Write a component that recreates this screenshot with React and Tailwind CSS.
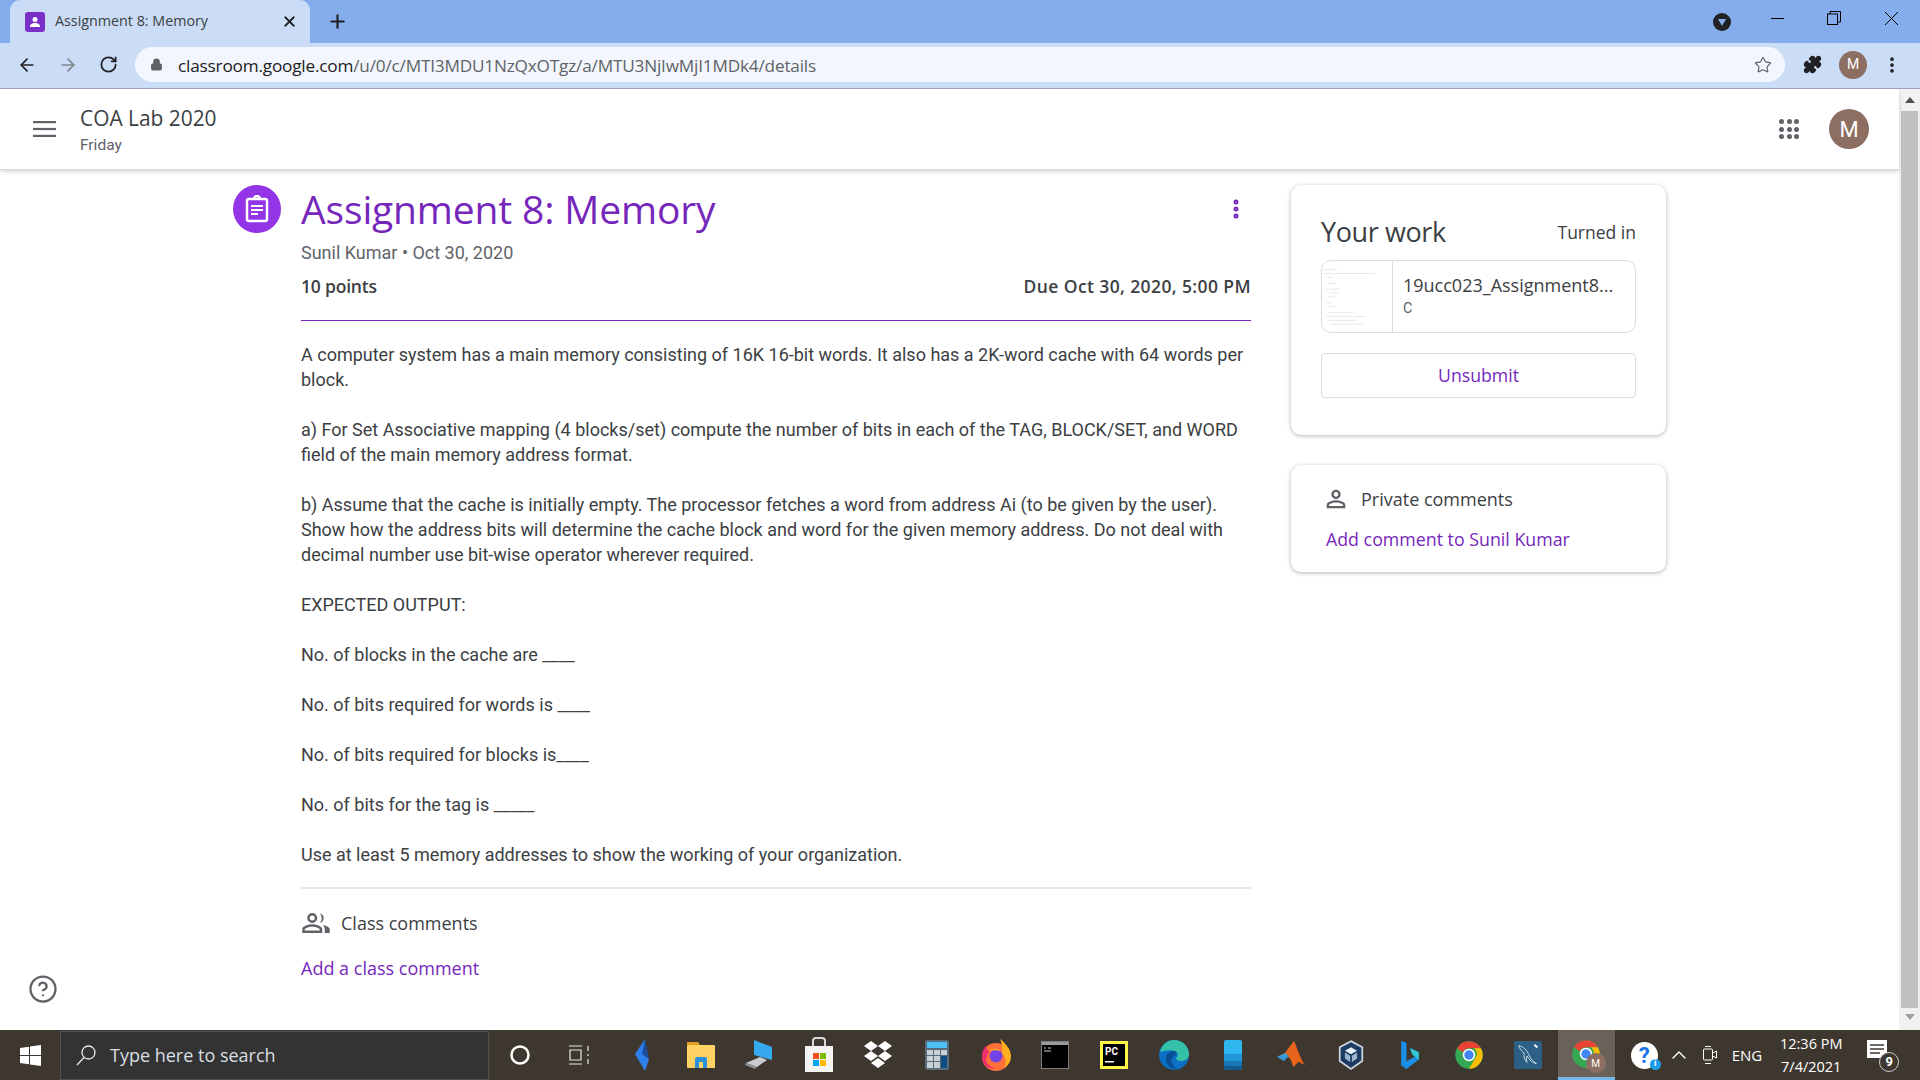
import { ArrowLeft, ArrowRight, RotateCw, Lock, Star, Plus, X, EllipsisVertical, CircleHelp, ChevronUp, Puzzle } from "lucide-react";

const sans = "font-['Roboto',sans-serif]";
const display = "font-['Open_Sans',sans-serif]";

const Avatar = ({ className }) => (
  <div className={`flex items-center justify-center rounded-full bg-[#8d6e63] text-white ${className}`}>M</div>
);

const PersonIcon = ({ className }) => (
  <svg viewBox="0 0 24 24" className={className} fill="#5f6368">
    <path d="M12 12a4 4 0 1 0 0-8 4 4 0 0 0 0 8zm0-6a2 2 0 1 1 0 4 2 2 0 0 1 0-4zm0 7c-2.7 0-8 1.3-8 4v3h16v-3c0-2.7-5.3-4-8-4zm6 5H6v-1c0-.6 3.100-2 6-2s6 1.400 6 2v1z" />
  </svg>
);

const PeopleIcon = ({ className }) => (
  <svg viewBox="0 0 24 24" className={className} fill="#5f6368">
    <path d="M9 12a4 4 0 1 0 0-8 4 4 0 0 0 0 8zm0-6a2 2 0 1 1 0 4 2 2 0 0 1 0-4zm0 7c-2.700 0-8 1.300-8 4v3h16v-3c0-2.700-5.300-4-8-4zm6 5H3v-1c0-.6 3.100-2 6-2s6 1.400 6 2v1z" />
    <path d="M15 4.100a4 4 0 0 1 0 7.800c1-1 1.500-2.400 1.500-3.900S16 5.100 15 4.100zM17.500 13.500c2.500.5 5.500 1.700 5.500 3.500v3h-4v-3c0-1.500-.6-2.600-1.500-3.500z" />
  </svg>
);

const Thumb = () => (
  <svg viewBox="0 0 72 72" className="h-full w-full">
    {[[2, 8, 14], [2, 12, 44], [30, 12, 24], [6, 16, 6], [6, 22, 8], [4, 28, 14], [8, 32, 10], [6, 36, 8], [4, 42, 6], [6, 46, 7], [6, 52, 26], [4, 56, 40], [6, 60, 30], [8, 64, 34]].map(([x, y, w], i) => (
      <rect key={i} x={x} y={y} width={w} height="0.8" fill="#e2e2e2" />
    ))}
  </svg>
);

const Chrome = ({ size = 34 }) => (
  <svg width={size} height={size} viewBox="0 0 48 48">
    <circle cx="24" cy="24" r="22" fill="#34a853" />
    <path d="M24 2a22 22 0 0 1 19 11H24a11 11 0 0 0-10 6.500L5 13A22 22 0 0 1 24 2z" fill="#ea4335" />
    <path d="M43 13a22 22 0 0 1-19 33l10-17a11 11 0 0 0-2-16z" fill="#fbbc04" />
    <circle cx="24" cy="24" r="10" fill="#fff" />
    <circle cx="24" cy="24" r="7.500" fill="#4285f4" />
  </svg>
);

const icons = [
  <svg key="cortana" width="22" height="22" viewBox="0 0 22 22"><circle cx="11" cy="11" r="8.500" fill="none" stroke="#fff" strokeWidth="2.500" /></svg>,
  <svg key="task" width="24" height="24" viewBox="0 0 24 24" fill="none" stroke="#e8e8e8" strokeWidth="1.200"><path d="M2 3h13M2 21h13M3 7h11v10H3zM21 3v5M21 11v2M21 16v5" /></svg>,
  <svg key="bolt" width="22" height="34" viewBox="0 0 22 34"><path d="M14 1 4 16l10 17 4-12-6-5z" fill="#2f80ed" /><path d="M14 1l-3 15 7 5z" fill="#1b4f9c" /></svg>,
  <svg key="explorer" width="30" height="28" viewBox="0 0 30 28"><path d="M1 1h11l2 3h-13z" fill="#e0a020" /><rect x="1" y="4" width="28" height="23" rx="1" fill="#ffd263" /><path d="M9 27V18a2 2 0 0 1 2-2h8a2 2 0 0 1 2 2v9h-4v-6h-4v6z" fill="#2b90d9" /></svg>,
  <svg key="pc" width="30" height="32" viewBox="0 0 30 32"><path d="M9 1l18 7v13L9 16z" fill="#36a9f0" /><path d="M15 18l7 3-10 7-11-4z" fill="#c9ccd0" /><path d="M1 24l11 4-2 2-10-4z" fill="#8d9297" /></svg>,
  <svg key="store" width="30" height="36" viewBox="0 0 30 36"><path d="M9 9V4a3 3 0 0 1 3-3h6a3 3 0 0 1 3 3v5" fill="none" stroke="#d8d8d8" strokeWidth="2" /><path d="M1 9h28v26H1z" fill="#f4f4f4" /><rect x="9" y="16" width="6" height="6" fill="#f25022" /><rect x="16" y="16" width="6" height="6" fill="#7fba00" /><rect x="9" y="23" width="6" height="6" fill="#00a4ef" /><rect x="16" y="23" width="6" height="6" fill="#ffb900" /></svg>,
  <svg key="dropbox" width="30" height="28" viewBox="0 0 30 28" fill="#fff"><path d="M8 0l7 5-7 5-7-5zM22 0l7 5-7 5-7-5zM8 10l7 5-7 5-7-5zM22 10l7 5-7 5-7-5zM15 17l7 5-7 5-7-5z" /></svg>,
  <svg key="calc" width="24" height="30" viewBox="0 0 24 30"><rect width="24" height="30" rx="2" fill="#5a6b7a" /><rect x="2" y="2" width="20" height="6" fill="#4fc3f7" /><g fill="#c8d0d6"><rect x="2" y="10" width="6" height="5" /><rect x="9" y="10" width="6" height="5" /><rect x="16" y="10" width="6" height="5" /><rect x="2" y="16" width="6" height="5" /><rect x="9" y="16" width="6" height="5" /><rect x="2" y="22" width="6" height="6" /><rect x="9" y="22" width="6" height="6" /></g><rect x="16" y="16" width="6" height="12" fill="#0f4c81" /></svg>,
  <svg key="firefox" width="32" height="34" viewBox="0 0 32 34"><circle cx="16" cy="19" r="14" fill="#ff7139" /><path d="M20 1c5 4 11 10 11 17a14 14 0 0 1-7 12c3-5 2-11-2-14 1-4 0-11-2-15z" fill="#ffb020" /><path d="M2 19c0-4 1-9 4-12 0 3 1 5 3 6l-3 8c-1 3 4 9 10 9-8 2-14-4-14-11z" fill="#e31587" opacity=".7" /><circle cx="16" cy="18" r="6.500" fill="#7542e5" /><path d="M9 13c3-3 9-3 11 0-3-1-8-1-11 0z" fill="#ffb020" /></svg>,
  <svg key="cmd" width="28" height="28" viewBox="0 0 28 28"><rect width="28" height="28" fill="#000" stroke="#a0a0a0" strokeWidth="1.500" /><rect x="1" y="1" width="26" height="3" fill="#9a9a9a" /><path d="M3 7h2M7 7h3M3 10h7" stroke="#ccc" /></svg>,
  <svg key="pycharm" width="28" height="28" viewBox="0 0 28 28"><rect width="28" height="28" fill="#fcf84a" /><rect x="3" y="3" width="22" height="22" fill="#000" /><rect x="5" y="20" width="9" height="1.500" fill="#fff" /><text x="5" y="14" fill="#fff" fontSize="10" fontWeight="700" fontFamily="Roboto, sans-serif">PC</text></svg>,
  <svg key="edge" width="32" height="32" viewBox="0 0 32 32"><circle cx="16" cy="16" r="15" fill="#0c70c4" /><path d="M2 13C4 5 10 1 16 1c9 0 15 7 15 14 0 5-4 7-8 7-3 0-5-1-5-3 2-1 3-5-1-7-6-2-12 0-15 1z" fill="#35c1a8" /><path d="M16 12c-5 0-9 4-8 10 1 5 6 8 11 8-6-4-7-10-3-13 3-1 2-5 0-5z" fill="#0a4f93" /></svg>,
  <svg key="phone" width="18" height="30" viewBox="0 0 18 30"><rect width="18" height="30" rx="2" fill="#2fb7ef" /><rect y="14" width="18" height="7" fill="#1f97d8" /><rect y="21" width="18" height="5" fill="#1577b5" /><path d="M0 26h18v2a2 2 0 0 1-2 2H2a2 2 0 0 1-2-2z" fill="#105a90" /></svg>,
  <svg key="matlab" width="30" height="30" viewBox="0 0 30 30"><path d="M0 17l8-4 5-7 4-5c3 6 6 18 11 24-3-1-5-3-7-3-1 2-3 3-5 5-1-6-3-9-6-11z" fill="#e8641b" /><path d="M0 17l8-4 4 3-5 5z" fill="#3a9bd4" /></svg>,
  <svg key="vbox" width="26" height="30" viewBox="0 0 30 34"><path d="M15 1l13 7v16l-13 9-13-9V8z" fill="#1d3a63" stroke="#d0d6de" strokeWidth="2" /><path d="M15 8l7 4-7 4-7-4z" fill="#e8eef5" /><path d="M8 14l6 4v7l-6-4zM22 14l-6 4v7l6-4z" fill="#9fb6cf" /></svg>,
  <svg key="bing" width="20" height="30" viewBox="0 0 22 34"><path d="M1 1l6 2v21l11-6-5-3-2-6 10 5v8L7 33l-6-4z" fill="#1b8fe8" /><path d="M11 9l10 5v8l-7-5z" fill="#35c6d8" /></svg>,
  <Chrome key="chrome" size={30} />,
  <svg key="mysql" width="28" height="30" viewBox="0 0 30 30"><rect width="30" height="30" rx="2" fill="#2b5f84" /><path d="M5 5c5 1 9 5 11 10s5 7 8 9c-4 0-8-4-10-8-1 3-1 5 0 7-3-3-4-7-3-10C8 11 6 8 5 5z" fill="none" stroke="#cfe0ea" strokeWidth="1" /><path d="M22 4l3 3" stroke="#fff" strokeWidth="2" /></svg>,
];

export default function App() {
  return (
    <div className={`flex h-screen w-[1920px] flex-col overflow-hidden bg-white ${sans}`}>
      {/* barra de abas */}
      <div className="flex h-[43px] shrink-0 items-end bg-[#85adeb] pl-[10px]">
        <div className="flex h-[43px] w-[300px] items-center rounded-t-[10px] bg-[#cbdcf6] pl-[15px] pr-[12px]">
          <div className="flex h-[20px] w-[20px] items-center justify-center rounded-[3px] bg-[#7b2fc9]">
            <svg width="12" height="12" viewBox="0 0 12 12" fill="#fff"><circle cx="6" cy="3.500" r="2.500" /><path d="M1 11c0-3 2-4 5-4s5 1 5 4z" /></svg>
          </div>
          <span className={`ml-[10px] flex-1 pb-[1px] text-[14.3px] text-[#3c4043] ${display}`}>Assignment 8: Memory</span>
          <X size={17} strokeWidth={2.5} className="text-[#202124]" />
        </div>
        <Plus size={21} strokeWidth={2.5} className="mb-[11px] ml-[17px] text-[#202124]" />
        <div className="flex-1" />
        <div className="mb-[12px] flex h-[18px] w-[18px] items-center justify-center rounded-full bg-[#202124]">
          <div className="h-0 w-0 border-x-[4px] border-t-[7px] border-x-transparent border-t-[#85adeb]" />
        </div>
        <div className="flex h-[43px] w-[53px] items-center justify-end">
          <div className="mb-[7px] h-px w-[13px] bg-black" />
        </div>
        <div className="flex h-[43px] w-[58px] items-center justify-end pr-[1px]">
          <svg width="14" height="14" viewBox="0 0 14 14" fill="none" stroke="#000" className="mb-[7px]"><rect x="0.500" y="3" width="10" height="10.500" /><path d="M3 3V0.500h10.500V11H10.500" /></svg>
        </div>
        <div className="flex h-[43px] w-[78px] items-center justify-end">
          <svg width="15" height="15" viewBox="0 0 15 15" stroke="#000" className="mb-[7px] mr-[21px]"><path d="M1 1l13 13M14 1L1 14" /></svg>
        </div>
      </div>

      {/* barra de endereço */}
      <div className="flex h-[46px] shrink-0 items-center border-b border-[#9aa5bd] bg-[#cbdcf6] pb-[2px] pl-[17px]">
        <ArrowLeft size={20} strokeWidth={2} className="text-[#202124]" />
        <ArrowRight size={20} strokeWidth={2} className="ml-[21px] text-[#80868b]" />
        <RotateCw size={19} strokeWidth={2.2} className="ml-[21px] text-[#202124]" />
        <div className="ml-[17px] flex h-[35px] w-[1650px] items-center rounded-full bg-[#f3f6fc] pl-[15px]">
          <Lock size={13} fill="#5f6368" className="text-[#5f6368]" />
          <span className={`ml-[15px] flex-1 pt-[2px] text-[17.2px] tracking-[-0.19px] text-[#202124] ${display}`}>
            classroom.google.com<span className="text-[#5f6368]">/u/0/c/MTI3MDU1NzQxOTgz/a/MTU3NjIwMjI1MDk4/details</span>
          </span>
          <Star size={18} strokeWidth={1.6} className="mr-[13px] text-[#5f6368]" />
        </div>
        <Puzzle size={19} fill="#202124" className="ml-[18px] text-[#202124]" />
        <Avatar className="ml-[17px] h-[28px] w-[28px] text-[14px]" />
        <EllipsisVertical size={20} strokeWidth={2.5} className="ml-[15px] text-[#202124]" />
      </div>

      {/* página */}
      <div className="flex min-h-0 flex-1">
        <div className="relative flex min-w-0 flex-1 flex-col">
          <div className="z-10 flex h-[81px] shrink-0 items-center border-b border-[#d8d8d8] bg-white pl-[33px] pr-[30px] shadow-[0_2px_4px_rgba(0,0,0,0.15)]">
            <svg width="23" height="16" viewBox="0 0 23 16" fill="#5f6368"><rect width="23" height="2.200" /><rect y="6.900" width="23" height="2.200" /><rect y="13.800" width="23" height="2.200" /></svg>
            <div className="ml-[24px] flex-1">
              <div className={`text-[20.9px] leading-[28px] text-[#3c4043] ${display}`}>COA Lab 2020</div>
              <div className="mt-[3px] text-[15.5px] leading-[20px] text-[#5f6368]">Friday</div>
            </div>
            <div className="grid grid-cols-3 gap-[2.500px]">
              {[...Array(9)].map((_, i) => (
                <div key={i} className="h-[5px] w-[5px] rounded-full bg-[#5f6368]" />
              ))}
            </div>
            <Avatar className="ml-[30px] h-[40px] w-[40px] text-[22px]" />
          </div>

          <div className="flex flex-1 pl-[233px] pt-[15px]">
            <div className="flex h-[48px] w-[48px] shrink-0 items-center justify-center rounded-full bg-[#9334e6]">
              <svg width="26" height="28" viewBox="0 0 26 28" fill="none" stroke="#fff" strokeWidth="2.500"><rect x="3" y="4" width="20" height="22" rx="2" /><path d="M10 4a3 3 0 0 1 6 0" /><path d="M7 11h12M7 15h12M7 19h7" strokeWidth="2" /></svg>
            </div>

            {/* coluna principal */}
            <div className="ml-[20px] w-[950px] shrink-0">
              <div className="flex h-[48px] items-center justify-between">
                <h1 className={`text-[39px] leading-[48px] tracking-[-0.15px] text-[#7627bb] ${display}`}>Assignment 8: Memory</h1>
                <EllipsisVertical size={24} strokeWidth={3} className="mr-[3px] text-[#7627bb]" />
              </div>
              <div className="mt-[7px] text-[18px] leading-[25px] text-[#5f6368]">Sunil Kumar • Oct 30, 2020</div>
              <div className={`mt-[9px] flex justify-between text-[17.5px] font-semibold leading-[25px] text-[#3c4043] ${display}`}>
                <span className="tracking-[-0.2px]">10 points</span>
                <span className="tracking-[0.4px]">Due Oct 30, 2020, 5:00 PM</span>
              </div>
              <div className="mt-[21px] h-px bg-[#7627bb]" />
              <div className="mt-[21px] text-[18px] leading-[25px] text-[#3c4043]">
                <p>A computer system has a main memory consisting of 16K 16-bit words. It also has a 2K-word cache with 64 words per block.</p>
                <p className="mt-[25px]">a) For Set Associative mapping (4 blocks/set) compute the number of bits in each of the TAG, BLOCK/SET, and WORD field of the main memory address format.</p>
                <p className="mt-[25px]">b) Assume that the cache is initially empty. The processor fetches a word from address Ai (to be given by the user). Show how the address bits will determine the cache block and word for the given memory address. Do not deal with decimal number use bit-wise operator wherever required.</p>
                <p className="mt-[25px]">EXPECTED OUTPUT:</p>
                <p className="mt-[25px]">No. of blocks in the cache are ____</p>
                <p className="mt-[25px]">No. of bits required for words is ____</p>
                <p className="mt-[25px]">No. of bits required for blocks is____</p>
                <p className="mt-[25px]">No. of bits for the tag is _____</p>
                <p className="mt-[25px]">Use at least 5 memory addresses to show the working of your organization.</p>
              </div>
              <div className="mt-[20px] h-[2px] bg-[#e8eaed]" />
              <div className="mt-[19px] flex items-center">
                <PeopleIcon className="-ml-[1px] h-[30px] w-[32px]" />
                <span className={`ml-[9px] text-[18px] font-medium text-[#3c4043] ${display}`}>Class comments</span>
              </div>
              <div className={`mt-[18px] text-[18px] font-medium leading-[25px] text-[#7627bb] ${display}`}>Add a class comment</div>
            </div>

            {/* coluna lateral */}
            <div className="ml-[40px] w-[375px] shrink-0">
              <div className="rounded-[10px] bg-white px-[30px] pb-[37px] pt-[32px] shadow-[0_1px_4px_rgba(60,64,67,0.4)]">
                <div className="flex h-[30px] items-center justify-between">
                  <span className={`text-[27px] tracking-[-0.4px] text-[#3c4043] ${display}`}>Your work</span>
                  <span className={`text-[17.5px] font-medium text-[#3c4043] ${display}`}>Turned in</span>
                </div>
                <div className="mt-[13px] flex h-[73px] overflow-hidden rounded-[10px] border border-[#dadce0]">
                  <div className="w-[71px] shrink-0 border-r border-[#dadce0]"><Thumb /></div>
                  <div className="min-w-0 flex-1 pl-[10px] pt-[12px]">
                    <div className={`truncate text-[18px] font-medium leading-[24px] text-[#3c4043] ${display}`}>19ucc023_Assignment8...</div>
                    <div className="mt-[2px] text-[14.5px] leading-[20px] text-[#5f6368]">C</div>
                  </div>
                </div>
                <div className={`mt-[20px] flex h-[45px] items-center justify-center rounded-[4px] border border-[#dadce0] text-[17.7px] font-medium text-[#7627bb] ${display}`}>Unsubmit</div>
              </div>
              <div className="mt-[30px] h-[107px] rounded-[10px] bg-white pl-[35px] pt-[20px] shadow-[0_1px_4px_rgba(60,64,67,0.4)]">
                <div className="-ml-[4px] flex items-center">
                  <PersonIcon className="h-[28px] w-[28px]" />
                  <span className={`ml-[11px] text-[18px] font-medium text-[#3c4043] ${display}`}>Private comments</span>
                </div>
                <div className={`mt-[14px] text-[17.8px] font-medium leading-[25px] text-[#7627bb] ${display}`}>Add comment to Sunil Kumar</div>
              </div>
            </div>
          </div>

          <CircleHelp size={30} strokeWidth={1.8} className="absolute bottom-[26px] left-[28px] text-[#5f6368]" />
        </div>

        {/* barra de rolagem */}
        <div className="flex w-[21px] shrink-0 flex-col items-center bg-[#f1f1f1]">
          <div className="mb-[8px] mt-[8px] h-0 w-0 border-x-[5px] border-b-[6px] border-x-transparent border-b-[#505050]" />
          <div className="h-[897px] w-[17px] bg-[#c1c1c1]" />
          <div className="mt-[6px] h-0 w-0 border-x-[5px] border-t-[6px] border-x-transparent border-t-[#a0a0a0]" />
        </div>
      </div>

      {/* barra de tarefas */}
      <div className="flex h-[50px] shrink-0 items-center bg-[#3e372f] text-white">
        <div className="flex w-[60px] justify-center">
          <svg width="21" height="21" viewBox="0 0 21 21" fill="#fff"><path d="M0 3l9-1.300V10H0zM10 1.500 21 0v10H10zM0 11h9v8.300L0 18zM10 11h11v10l-11-1.500z" /></svg>
        </div>
        <div className="flex h-[49px] w-[429px] items-center border border-[#505050] bg-[#333333] pl-[14px]">
          <svg width="22" height="22" viewBox="0 0 22 22" fill="none" stroke="#e8e8e8" strokeWidth="1.300"><circle cx="13.500" cy="8.500" r="6.500" /><path d="M9 13.500 2 21" /></svg>
          <span className={`ml-[13px] text-[18px] text-[#d8dee4] ${display}`}>Type here to search</span>
        </div>
        <div className="ml-[1px] flex h-full">
          {icons.map((icon, i) => (
            <div key={icon.key} className={`flex h-full w-[59.100px] items-center justify-center ${i === 1 ? "mr-[4px]" : ""}`}>{icon}</div>
          ))}
          <div className="relative flex h-full w-[57px] items-center justify-center border-b-[3px] border-[#76b9ed] bg-[#6a6258]">
            <Chrome size={30} />
            <Avatar className="absolute bottom-[4px] right-[9px] h-[20px] w-[20px] text-[10px]" />
          </div>
        </div>
        <div className="relative ml-[16px] flex h-[27px] w-[27px] items-center justify-center rounded-full bg-white text-[22px] font-bold text-[#1a73e8]">
          ?
          <div className="absolute -bottom-[1px] -right-[3px] flex h-[11px] w-[11px] items-center justify-center rounded-full bg-[#1a9be8] text-[9px] text-white">i</div>
        </div>
        <ChevronUp size={24} strokeWidth={1.4} className="ml-[9px]" />
        <svg width="14" height="20" viewBox="0 0 14 20" fill="none" stroke="#fff" className="ml-[12px]"><rect x="0.500" y="4" width="9" height="11" rx="1" /><path d="M9.500 8l4-2v7l-4-2M2 1.500h6M2 18.500h6" /></svg>
        <span className={`ml-[15px] text-[15px] ${display}`}>ENG</span>
        <div className={`ml-[9px] w-[80px] whitespace-nowrap text-center text-[14.5px] leading-[23px] ${display}`}>
          <div>12:36 PM</div>
          <div>7/4/2021</div>
        </div>
        <div className="relative ml-[16px] h-[30px] w-[30px]">
          <svg width="20" height="24" viewBox="0 0 20 24" className="absolute left-0 top-0"><path d="M0 0h20v18H0z" fill="#fff" /><path d="M3 5h14M3 9h14M3 13h10" stroke="#3e372f" strokeWidth="1.500" /></svg>
          <div className="absolute bottom-[-2px] right-[-2px] flex h-[20px] w-[20px] items-center justify-center rounded-full border border-[#ccc] bg-[#3e372f] text-[13px] font-bold">9</div>
        </div>
      </div>
    </div>
  );
}
